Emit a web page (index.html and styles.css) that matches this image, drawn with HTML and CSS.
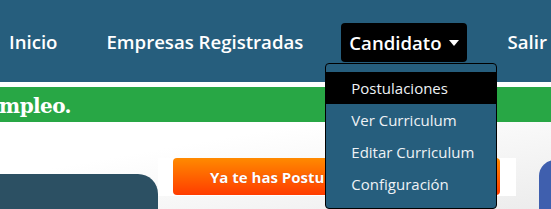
FILE: index.html
```html
<!DOCTYPE html>
<html lang="es">
<head>
<meta charset="utf-8">
<link rel="stylesheet" href="styles.css">
</head>
<body>
<header class="navbar">
  <a class="nav-link" href="#">Inicio</a>
  <a class="nav-link" href="#">Empresas Registradas</a>
  <div class="nav-dropdown">
    <a class="nav-link dropdown-toggle" href="#">Candidato<span class="caret"></span></a>
    <ul class="dropdown-menu">
      <li><a class="dropdown-item active" href="#">Postulaciones</a></li>
      <li><a class="dropdown-item" href="#">Ver Curriculum</a></li>
      <li><a class="dropdown-item" href="#">Editar Curriculum</a></li>
      <li><a class="dropdown-item" href="#">Configuración</a></li>
    </ul>
  </div>
  <a class="nav-link" href="#">Salir</a>
</header>
<div class="banner"><span class="banner-text">empleo.</span></div>
<main class="content">
  <div class="side-pill"></div>
  <div class="cta-box"><a class="cta-btn" href="#">Ya te has Postulado</a></div>
  <div class="social"></div>
</main>
</body>
</html>
```
FILE: styles.css
```css
* { box-sizing: border-box; }
html, body { margin: 0; padding: 0; }
body {
  width: 551px;
  height: 209px;
  overflow: hidden;
  background: #fff;
  font-family: "Open Sans", "Noto Sans", sans-serif;
}
a { text-decoration: none; color: inherit; }

.navbar {
  height: 82px;
  background: #265e7d;
  display: flex;
  align-items: center;
  padding-left: 1px;
  border-bottom: 5px solid #fff;
  box-sizing: content-box;
}
.nav-link {
  color: #fff;
  font-size: 18.6px;
  font-weight: 600;
  padding: 8px 8px;
  line-height: 23px;
  white-space: nowrap;
}
.navbar > .nav-link:nth-child(1) { margin-right: 33px; }
.navbar > .nav-link:nth-child(2) { margin-right: 30px; }

.nav-dropdown { position: relative; margin-right: 33px; }
.dropdown-toggle {
  display: flex;
  align-items: center;
  background: #000;
  border-radius: 4px;
  height: 39px;
  padding: 0 8px 0 8px;
  margin-top: 2px;
}
.caret {
  display: inline-block;
  margin-left: 7px;
  border-top: 6px solid #fff;
  border-left: 5px solid transparent;
  border-right: 5px solid transparent;
  margin-top: 1px;
}
.dropdown-menu {
  position: absolute;
  top: 42px;
  left: -16px;
  width: 172px;
  margin: 0;
  padding: 8px 0;
  list-style: none;
  background: #265e7d;
  border: 1px solid #000;
  border-radius: 4px;
  z-index: 10;
}
.dropdown-item {
  display: block;
  height: 32px;
  line-height: 32px;
  padding-left: 25px;
  font-size: 15px;
  color: #eef2f5;
  white-space: nowrap;
}
.dropdown-item.active { background: #000; }

.banner {
  height: 35px;
  background: #28a745;
  overflow: hidden;
  display: flex;
  align-items: center;
}
.banner-text {
  margin-left: -13px;
  font-family: "DejaVu Serif", serif;
  font-weight: bold;
  font-size: 20px;
  color: #fff;
  letter-spacing: -0.6px;
  padding-top: 2px;
}

.content {
  height: 87px;
  overflow: hidden;
  display: flex;
  align-items: flex-start;
  background: linear-gradient(170deg, #ffffff 30%, #ececec 100%);
  padding-top: 36px;
}
.side-pill {
  flex-shrink: 0;
  width: 158px;
  height: 60px;
  margin-top: 16px;
  background: #2c5063;
  border-radius: 0 20px 20px 0;
}
.cta-box {
  flex-shrink: 0;
  width: 358px;
  height: 38px;
  background: #fff;
  padding-left: 15px;
  padding-right: 16px;
}
.cta-btn {
  display: flex;
  align-items: center;
  height: 37px;
  background: linear-gradient(#ff8a00, #ff3c00);
  border-radius: 4px;
  padding-left: 37px;
  color: #fff;
  font-weight: 700;
  font-size: 15px;
  white-space: nowrap;
  overflow: hidden;
  text-shadow: 0 0 1px rgba(120,0,0,.4);
}
.social {
  flex-shrink: 0;
  margin-left: 23px;
  margin-top: 2px;
  width: 40px;
  height: 60px;
  background: #3f5fae;
  border-radius: 16px 0 0 0;
}
```
